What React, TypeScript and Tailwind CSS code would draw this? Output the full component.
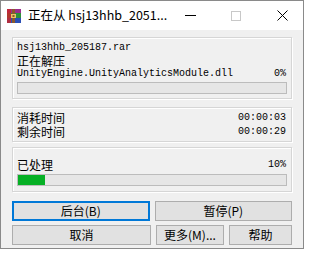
import React from 'react';

const mono = "font-['Liberation_Mono','Noto_Sans_CJK_SC',monospace]";
const cjk = "font-['Noto_Sans_CJK_SC','Noto_Sans',sans-serif]";

function WinRarIcon() {
  return (
    <svg width="16" height="16" viewBox="0 0 16 16" className="shrink-0">
      <rect x="1" y="1" width="14" height="4" fill="#9b2d8c" />
      <rect x="1" y="5" width="14" height="5" fill="#2f8f3a" />
      <rect x="1" y="10" width="14" height="5" fill="#2b4fb5" />
      <rect x="1" y="1" width="4" height="14" fill="#c8282e" opacity="0.85" />
      <rect x="6" y="1" width="3" height="14" fill="#8a5a2b" />
      <rect x="5" y="6" width="5" height="4" fill="#e9c46a" />
      <rect x="6.5" y="7" width="2" height="2" fill="#8a5a2b" />
    </svg>
  );
}

function Group({ className = '', children }: { className?: string; children: React.ReactNode }) {
  return (
    <div className={`border border-[#d6d6d6] shadow-[inset_1px_1px_0_#fff,1px_1px_0_#fff] ${className}`}>
      {children}
    </div>
  );
}

function Bar({ pct }: { pct: number }) {
  return (
    <div className="h-[12px] border border-[#bcbcbc] bg-[#e6e6e6]">
      <div className="h-full bg-[#06b025]" style={{ width: `${pct}%` }} />
    </div>
  );
}

function Btn({ children, className = '', focus = false }: { children: React.ReactNode; className?: string; focus?: boolean }) {
  return (
    <button
      className={`h-[20px] flex items-center justify-center bg-[#e1e1e1] text-[12px] leading-none text-black ${cjk} ${
        focus ? 'border-2 border-[#0078d7]' : 'border border-[#adadad]'
      } ${className}`}
    >
      {children}
    </button>
  );
}

function TimeRow({ label, value, className = '' }: { label: string; value: string; className?: string }) {
  return (
    <div className={`flex justify-between items-center h-[13px] ${className}`}>
      <span className={`${cjk} text-[12px] leading-[13px]`}>{label}</span>
      <span className={`${mono} text-[10px] leading-[13px] pr-[1px]`}>{value}</span>
    </div>
  );
}

export default function App() {
  return (
    <div className="w-[309px] h-[253px] bg-white overflow-hidden relative">
      <div className="w-[304px] h-[249px] border border-[#8a8a8a] flex flex-col bg-[#f0f0f0]">
        {/* title bar */}
        <div className="h-[29px] bg-white flex items-center pl-[5px] shrink-0">
          <WinRarIcon />
          <span className={`ml-[6px] text-[12.5px] text-black ${cjk} whitespace-nowrap`}>正在从 hsj13hhb_2051...</span>
          <div className="ml-auto flex items-center h-full">
            <div className="w-[46px] flex justify-center">
              <div className="w-[11px] h-px bg-black" />
            </div>
            <div className="w-[46px] flex justify-center">
              <div className="w-[10px] h-[10px] border border-[#c8c8c8]" />
            </div>
            <div className="w-[46px] flex justify-center">
              <svg width="11" height="11" viewBox="0 0 11 11">
                <path d="M0.5 0.5L10.5 10.5M10.5 0.5L0.5 10.5" stroke="#000" strokeWidth="1" />
              </svg>
            </div>
          </div>
        </div>

        {/* client */}
        <div className="flex-1 px-[11px] pt-[7px] text-black">
          <Group className="h-[62px] px-[4px] pt-[3px]">
            <div className={`${mono} text-[10px] leading-[13px]`}>hsj13hhb_205187.rar</div>
            <div className={`${cjk} text-[12px] leading-[13px]`}>正在解压</div>
            <div className={`${mono} text-[10px] leading-[13px] flex justify-between pr-[1px]`}>
              <span>UnityEngine.UnityAnalyticsModule.dll</span>
              <span>0%</span>
            </div>
            <div className="mt-[2px]">
              <Bar pct={0} />
            </div>
          </Group>

          <Group className="h-[35px] mt-[8px] px-[4px] pt-[3px]">
            <TimeRow label="消耗时间" value="00:00:03" />
            <TimeRow label="剩余时间" value="00:00:29" className="mt-[1px]" />
          </Group>

          <Group className="h-[45px] mt-[5px] px-[4px] pt-[10px]">
            <TimeRow label="已处理" value="10%" />
            <div className="mt-[3px]">
              <Bar pct={10} />
            </div>
          </Group>

          <div className="mt-[9px] grid grid-cols-2 gap-x-[5px]">
            <Btn focus>后台(B)</Btn>
            <Btn>暂停(P)</Btn>
          </div>
          <div className="mt-[4px] flex gap-[5px]">
            <Btn className="w-[139px]">取消</Btn>
            <Btn className="w-[68px]">更多(M)...</Btn>
            <Btn className="flex-1">帮助</Btn>
          </div>
        </div>
      </div>
    </div>
  );
}
